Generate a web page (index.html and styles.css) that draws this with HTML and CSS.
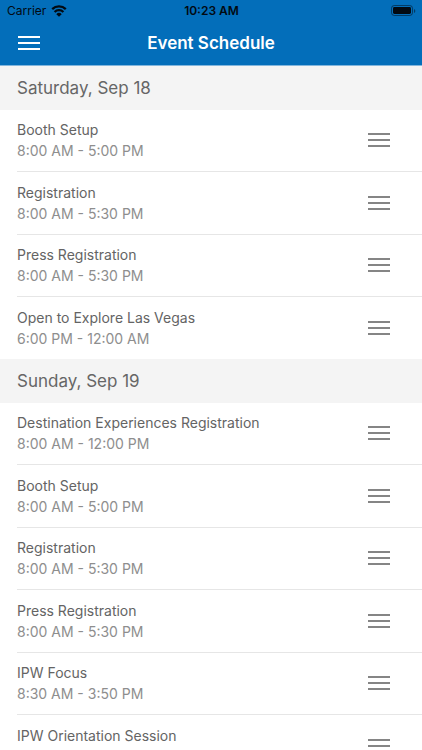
FILE: index.html
```html
<!DOCTYPE html>
<html lang="en">
<head>
<meta charset="utf-8">
<meta name="viewport" content="width=device-width, initial-scale=1">
<title>Event Schedule</title>
<link rel="stylesheet" href="styles.css">
</head>
<body>
<header class="top">
  <div class="status">
    <span class="carrier">Carrier
      <svg class="wifi" viewBox="0 0 16 12" aria-hidden="true">
        <path d="M1.2 4.2A9.8 9.8 0 0 1 14.8 4.2M3.6 7A6.3 6.3 0 0 1 12.4 7" fill="none" stroke="currentColor" stroke-width="2.3"/>
        <path d="M8 11.8L5.3 9.2A3.8 3.8 0 0 1 10.7 9.2Z" fill="currentColor"/>
      </svg>
    </span>
    <span class="clock">10:23 AM</span>
    <svg class="battery" viewBox="0 0 25 12" aria-hidden="true">
      <rect x=".5" y=".5" width="21" height="10" rx="2.8" fill="none" stroke="currentColor" opacity=".5"/>
      <rect x="2" y="2" width="18" height="7" rx="1.4" fill="currentColor"/>
      <path d="M23 4v4q1.3-.5 1.3-2T23 4z" fill="currentColor" opacity=".5"/>
    </svg>
  </div>
  <div class="nav">
    <button class="icon-button" type="button" aria-label="Menu"><svg class="bars" viewBox="0 0 22 14"><path d="M0 1h22M0 7h22M0 13h22"/></svg></button>
    <h1 class="title">Event Schedule</h1>
  </div>
</header>
<main class="schedule" id="schedule"></main>
<script src="script.js"></script>
</body>
</html>
```
FILE: styles.css
```css
* { box-sizing: border-box; }

body {
  margin: 0;
  height: 100vh;
  display: flex;
  flex-direction: column;
  background: #fff;
  font-family: Inter, "Liberation Sans", sans-serif;
}

.top {
  flex: none;
  background: #036eba;
  border-bottom: 1px solid #82b6dd;
}

.status {
  display: grid;
  grid-template-columns: 1fr auto 1fr;
  align-items: center;
  height: 22px;
  padding: 0 6px 0 7px;
  color: #020a12;
  font-size: 12px;
  line-height: 22px;
}

.carrier {
  display: flex;
  align-items: center;
  gap: 5px;
}

.wifi { width: 16px; height: 12px; }

.clock { font-weight: 600; }

.battery { width: 25px; height: 12px; justify-self: end; }

.nav {
  display: grid;
  grid-template-columns: 57px 1fr 57px;
  align-items: center;
  height: 43px;
  padding-bottom: 1px;
}

.title {
  margin: 0;
  color: #fff;
  font-size: 17px;
  font-weight: 600;
  line-height: 24px;
  text-align: center;
}

.icon-button {
  display: flex;
  align-items: center;
  justify-content: center;
  width: 56px;
  height: 40px;
  padding: 0;
  border: 0;
  background: none;
  color: #fff;
}

.nav .icon-button { width: 58px; }

.bars {
  width: 22px;
  height: 14px;
  fill: none;
  stroke: currentColor;
  stroke-width: 2;
}

.schedule {
  flex: 1;
  overflow-y: auto;
  scrollbar-width: none;
}

.day {
  margin: 0;
  padding: 0 17px;
  background: #f4f4f4;
  color: #666;
  font-size: 17px;
  font-weight: 400;
  line-height: 44px;
}

.events {
  margin: 0;
  padding: 0 0 0 17px;
  list-style: none;
}

.event {
  display: flex;
  align-items: center;
  justify-content: space-between;
  height: 62px;
  padding: 0 15px 1px 0;
  border-bottom: 1px solid #e6e6e6;
}

.event:nth-child(even) { height: 63px; }

.event:last-child { height: 62px; border-bottom: 0; }

.name, .time {
  margin: 0;
  font-size: 14px;
  font-weight: 400;
  line-height: 21px;
}

.name { color: #646464; }

.time { color: #8e8e8e; }

.event .icon-button { color: #858585; }
```
FILE: script.js
```js
const days = [
  ["Saturday, Sep 18", [
    ["Booth Setup", "8:00 AM - 5:00 PM"],
    ["Registration", "8:00 AM - 5:30 PM"],
    ["Press Registration", "8:00 AM - 5:30 PM"],
    ["Open to Explore Las Vegas", "6:00 PM - 12:00 AM"]
  ]],
  ["Sunday, Sep 19", [
    ["Destination Experiences Registration", "8:00 AM - 12:00 PM"],
    ["Booth Setup", "8:00 AM - 5:00 PM"],
    ["Registration", "8:00 AM - 5:30 PM"],
    ["Press Registration", "8:00 AM - 5:30 PM"],
    ["IPW Focus", "8:30 AM - 3:50 PM"],
    ["IPW Orientation Session", ""]
  ]]
];

const eventRow = ([name, time]) => `
  <li class="event">
    <div class="info"><h3 class="name">${name}</h3><p class="time">${time || "&nbsp;"}</p></div>
    <button class="icon-button" type="button" aria-label="Options for ${name}"><svg class="bars" viewBox="0 0 22 14"><path d="M0 1h22M0 7h22M0 13h22"/></svg></button>
  </li>`;

document.getElementById("schedule").innerHTML = days.map(([day, events]) => `
  <section>
    <h2 class="day">${day}</h2>
    <ul class="events">${events.map(eventRow).join("")}</ul>
  </section>`).join("");
```
